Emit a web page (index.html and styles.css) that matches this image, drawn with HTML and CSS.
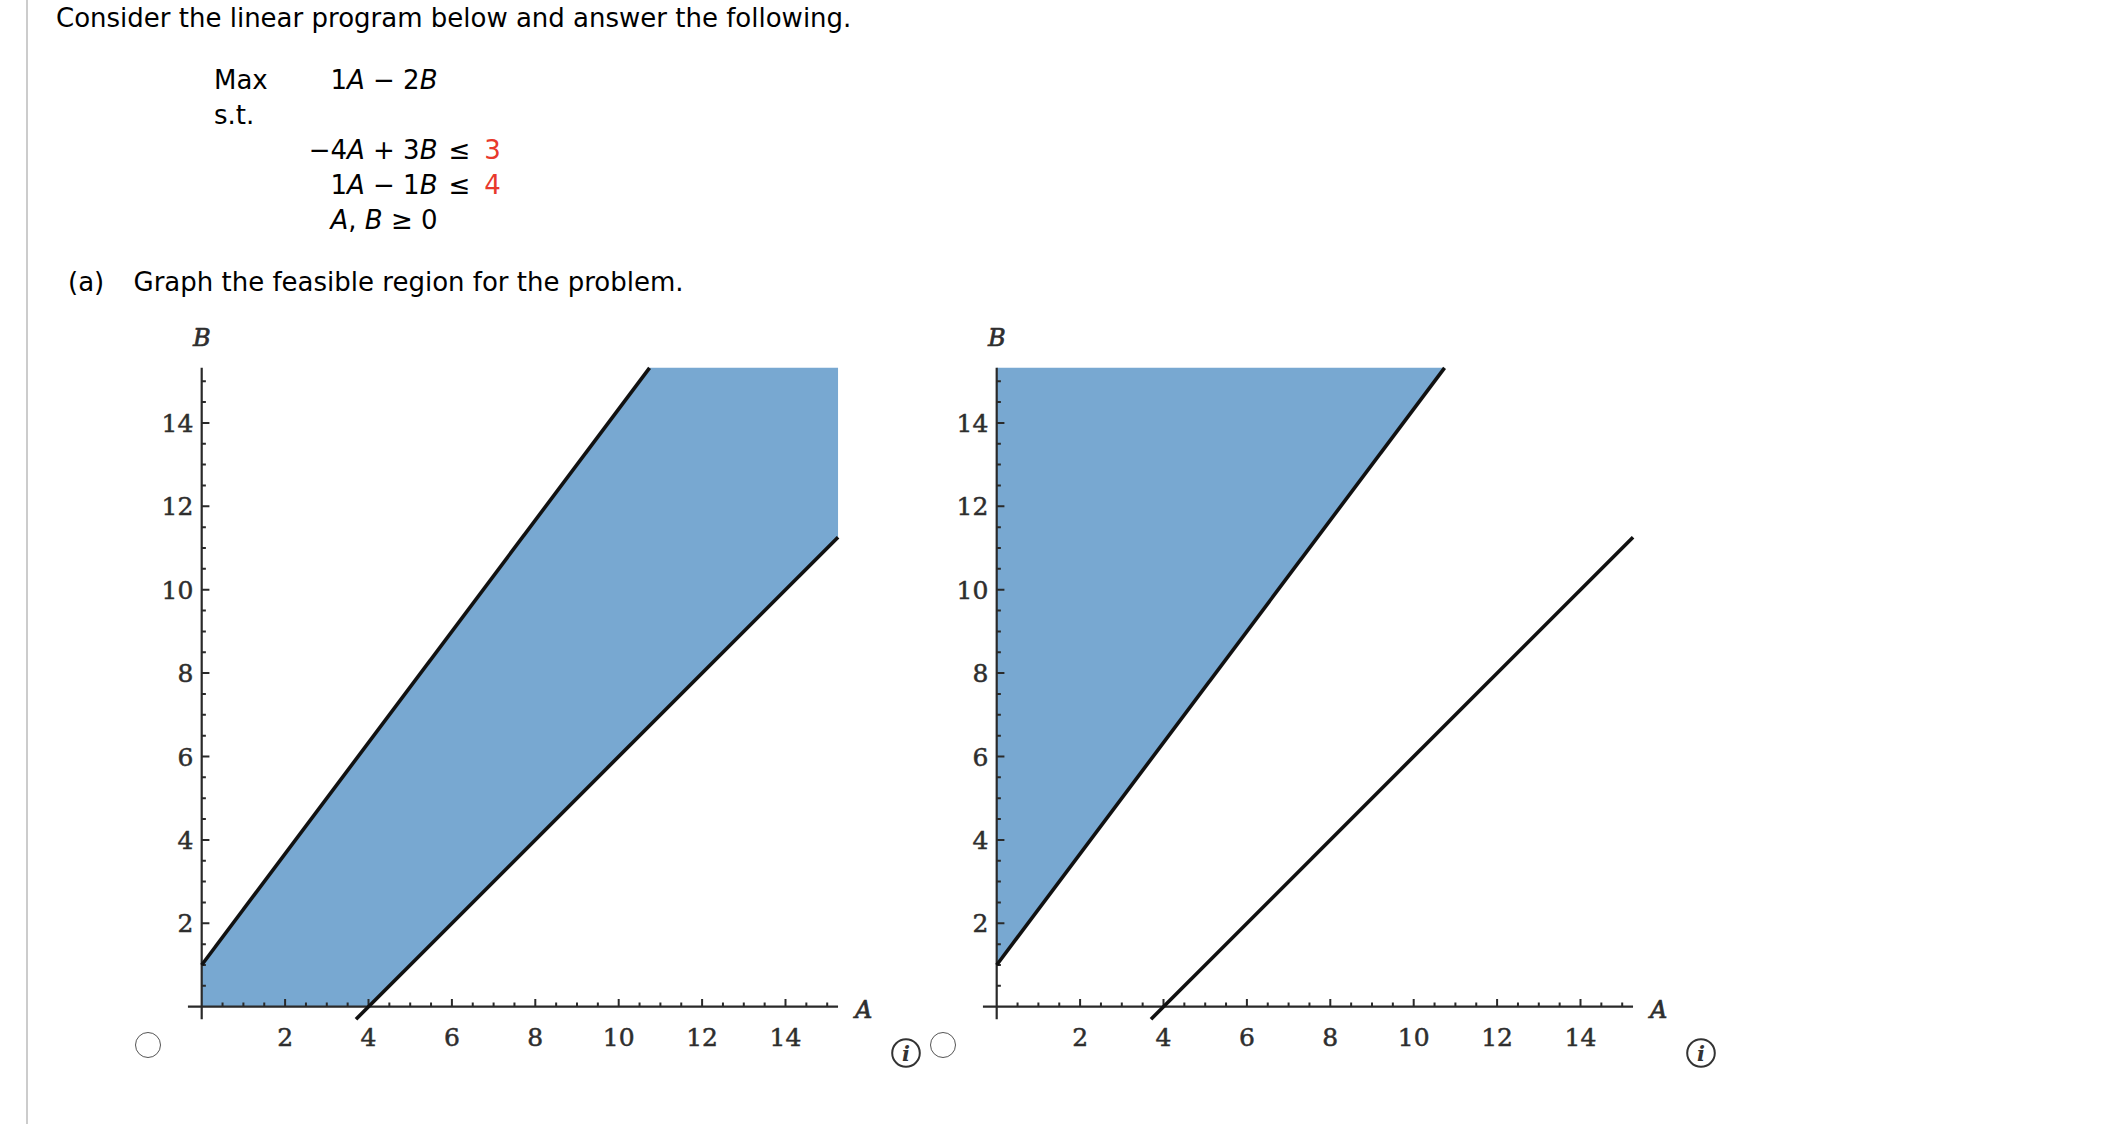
FILE: index.html
```html
<!DOCTYPE html>
<html lang="en">
<head>
<meta charset="utf-8">
<title>Linear program</title>
<link rel="stylesheet" href="styles.css">
</head>
<body>
<div class="page">
  <p class="intro">Consider the linear program below and answer the following.</p>

  <div class="lp">
    <div class="lbl">Max</div>
    <div class="expr">1<i>A</i> − 2<i>B</i></div>
    <div class="rel"></div>
    <div class="rhs"></div>

    <div class="lbl">s.t.</div>
    <div class="expr"></div>
    <div class="rel"></div>
    <div class="rhs"></div>

    <div class="lbl"></div>
    <div class="expr">−4<i>A</i> + 3<i>B</i></div>
    <div class="rel">≤</div>
    <div class="rhs red">3</div>

    <div class="lbl"></div>
    <div class="expr">1<i>A</i> − 1<i>B</i></div>
    <div class="rel">≤</div>
    <div class="rhs red">4</div>

    <div class="lbl"></div>
    <div class="expr"><i>A</i>, <i>B</i> ≥ 0</div>
    <div class="rel"></div>
    <div class="rhs"></div>
  </div>

  <p class="part"><span class="part-label">(a)</span>Graph the feasible region for the problem.</p>

  <div class="options">
    <div class="option">
      <span class="radio"></span>
      <svg class="graph" width="730" height="770" viewBox="0 0 730 770">
        <g transform="translate(40.7 706.7) scale(41.7 -41.7)">
          <path class="fill" d="M0 0 L4 0 L15.26 11.26 L15.26 15.32 L10.74 15.32 L0 1 Z"/>
          <path class="axis" d="M-0.33 0 H15.26 M0 -0.3 V15.32"/>
          <path class="tick" d="M0.5 0V0.1M1 0V0.1M1.5 0V0.1M2 0V0.185M2.5 0V0.1M3 0V0.1M3.5 0V0.1M4 0V0.185M4.5 0V0.1M5 0V0.1M5.5 0V0.1M6 0V0.185M6.5 0V0.1M7 0V0.1M7.5 0V0.1M8 0V0.185M8.5 0V0.1M9 0V0.1M9.5 0V0.1M10 0V0.185M10.5 0V0.1M11 0V0.1M11.5 0V0.1M12 0V0.185M12.5 0V0.1M13 0V0.1M13.5 0V0.1M14 0V0.185M14.5 0V0.1M15 0V0.1"/>
          <path class="tick" d="M0 0.5H0.1M0 1H0.1M0 1.5H0.1M0 2H0.185M0 2.5H0.1M0 3H0.1M0 3.5H0.1M0 4H0.185M0 4.5H0.1M0 5H0.1M0 5.5H0.1M0 6H0.185M0 6.5H0.1M0 7H0.1M0 7.5H0.1M0 8H0.185M0 8.5H0.1M0 9H0.1M0 9.5H0.1M0 10H0.185M0 10.5H0.1M0 11H0.1M0 11.5H0.1M0 12H0.185M0 12.5H0.1M0 13H0.1M0 13.5H0.1M0 14H0.185M0 14.5H0.1M0 15H0.1"/>
          <path class="line" d="M0 1 L10.74 15.32"/>
          <path class="line" d="M3.7 -0.3 L15.26 11.26"/>
        </g>
        <g class="xlabels">
          <text x="124.1" y="746">2</text>
          <text x="207.5" y="746">4</text>
          <text x="290.9" y="746">6</text>
          <text x="374.3" y="746">8</text>
          <text x="457.7" y="746">10</text>
          <text x="541.1" y="746">12</text>
          <text x="624.5" y="746">14</text>
        </g>
        <g class="ylabels">
          <text x="32.3" y="632.3">2</text>
          <text x="32.3" y="548.9">4</text>
          <text x="32.3" y="465.5">6</text>
          <text x="32.3" y="382.1">8</text>
          <text x="32.3" y="298.7">10</text>
          <text x="32.3" y="215.3">12</text>
          <text x="32.3" y="131.9">14</text>
        </g>
        <text class="axlabel mid" x="40.7" y="46">B</text>
        <text class="axlabel" x="694" y="718">A</text>
      </svg>
      <svg class="info" width="30" height="30" viewBox="0 0 30 30">
        <circle cx="15" cy="15" r="13.8"/>
        <text x="15" y="22.5">i</text>
      </svg>
    </div>

    <div class="option">
      <span class="radio"></span>
      <svg class="graph" width="730" height="770" viewBox="0 0 730 770">
        <g transform="translate(40.7 706.7) scale(41.7 -41.7)">
          <path class="fill" d="M0 1 L10.74 15.32 L0 15.32 Z"/>
          <path class="axis" d="M-0.33 0 H15.26 M0 -0.3 V15.32"/>
          <path class="tick" d="M0.5 0V0.1M1 0V0.1M1.5 0V0.1M2 0V0.185M2.5 0V0.1M3 0V0.1M3.5 0V0.1M4 0V0.185M4.5 0V0.1M5 0V0.1M5.5 0V0.1M6 0V0.185M6.5 0V0.1M7 0V0.1M7.5 0V0.1M8 0V0.185M8.5 0V0.1M9 0V0.1M9.5 0V0.1M10 0V0.185M10.5 0V0.1M11 0V0.1M11.5 0V0.1M12 0V0.185M12.5 0V0.1M13 0V0.1M13.5 0V0.1M14 0V0.185M14.5 0V0.1M15 0V0.1"/>
          <path class="tick" d="M0 0.5H0.1M0 1H0.1M0 1.5H0.1M0 2H0.185M0 2.5H0.1M0 3H0.1M0 3.5H0.1M0 4H0.185M0 4.5H0.1M0 5H0.1M0 5.5H0.1M0 6H0.185M0 6.5H0.1M0 7H0.1M0 7.5H0.1M0 8H0.185M0 8.5H0.1M0 9H0.1M0 9.5H0.1M0 10H0.185M0 10.5H0.1M0 11H0.1M0 11.5H0.1M0 12H0.185M0 12.5H0.1M0 13H0.1M0 13.5H0.1M0 14H0.185M0 14.5H0.1M0 15H0.1"/>
          <path class="line" d="M0 1 L10.74 15.32"/>
          <path class="line" d="M3.7 -0.3 L15.26 11.26"/>
        </g>
        <g class="xlabels">
          <text x="124.1" y="746">2</text>
          <text x="207.5" y="746">4</text>
          <text x="290.9" y="746">6</text>
          <text x="374.3" y="746">8</text>
          <text x="457.7" y="746">10</text>
          <text x="541.1" y="746">12</text>
          <text x="624.5" y="746">14</text>
        </g>
        <g class="ylabels">
          <text x="32.3" y="632.3">2</text>
          <text x="32.3" y="548.9">4</text>
          <text x="32.3" y="465.5">6</text>
          <text x="32.3" y="382.1">8</text>
          <text x="32.3" y="298.7">10</text>
          <text x="32.3" y="215.3">12</text>
          <text x="32.3" y="131.9">14</text>
        </g>
        <text class="axlabel mid" x="40.7" y="46">B</text>
        <text class="axlabel" x="694" y="718">A</text>
      </svg>
      <svg class="info" width="30" height="30" viewBox="0 0 30 30">
        <circle cx="15" cy="15" r="13.8"/>
        <text x="15" y="22.5">i</text>
      </svg>
    </div>
  </div>
</div>
</body>
</html>
```

FILE: styles.css
```css
html, body {
  margin: 0;
  padding: 0;
  background: #fff;
}

body {
  font-family: "DejaVu Sans", Verdana, sans-serif;
  font-size: 26px;
  color: #000;
}

.page {
  box-sizing: border-box;
  min-height: 1124px;
  margin-left: 26px;
  border-left: 2px solid #cccccc;
  padding: 3px 0 0 28px;
}

.intro {
  margin: 0;
  line-height: 30px;
}

.lp {
  display: grid;
  grid-template-columns: 88px 135.5px auto auto;
  justify-content: start;
  margin: 30px 0 0 158px;
  line-height: 35px;
  height: 175px;
}

.lp i {
  font-style: italic;
}

.lbl {
  text-align: left;
}

.expr {
  text-align: right;
  white-space: nowrap;
}

.rel {
  padding-left: 11px;
}

.rhs {
  padding-left: 14px;
}

.red {
  color: #e8382c;
}

.part {
  margin: 29px 0 0 12px;
  line-height: 30px;
}

.part-label {
  display: inline-block;
  width: 65.5px;
}

.options {
  display: flex;
  margin: 3px 0 0 79px;
}

.option {
  display: flex;
  align-items: flex-end;
  width: 795px;
  flex: none;
}

.radio {
  box-sizing: border-box;
  width: 26px;
  height: 26px;
  border: 1.6px solid #555;
  border-radius: 50%;
  margin-bottom: 12px;
  flex: none;
}

.graph {
  display: block;
  overflow: visible;
  flex: none;
}

.graph .fill {
  fill: #78a8d1;
  stroke: none;
}

.graph .axis {
  fill: none;
  stroke: #2a2a2a;
  stroke-width: 2.2px;
  vector-effect: non-scaling-stroke;
}

.graph .tick {
  fill: none;
  stroke: #2a2a2a;
  stroke-width: 2px;
  vector-effect: non-scaling-stroke;
}

.graph .line {
  fill: none;
  stroke: #111;
  stroke-width: 3.6px;
  vector-effect: non-scaling-stroke;
}

.xlabels text,
.ylabels text {
  font-family: "DejaVu Serif", "Liberation Serif", serif;
  font-size: 25px;
  fill: #2e2e2e;
  stroke: #2e2e2e;
  stroke-width: 0.5px;
}

.xlabels text {
  text-anchor: middle;
}

.ylabels text {
  text-anchor: end;
}

.axlabel {
  font-family: "DejaVu Serif", "Liberation Serif", serif;
  font-style: italic;
  font-size: 24px;
  fill: #2e2e2e;
  stroke: #2e2e2e;
  stroke-width: 0.7px;
}

.axlabel.mid {
  text-anchor: middle;
}

.info {
  display: block;
  flex: none;
  margin-bottom: 2.5px;
  margin-right: 9px;
}

.info circle {
  fill: none;
  stroke: #333;
  stroke-width: 2px;
}

.info text {
  font-family: "DejaVu Serif", "Liberation Serif", serif;
  font-style: italic;
  font-weight: bold;
  font-size: 21px;
  fill: #333;
  text-anchor: middle;
}
```
